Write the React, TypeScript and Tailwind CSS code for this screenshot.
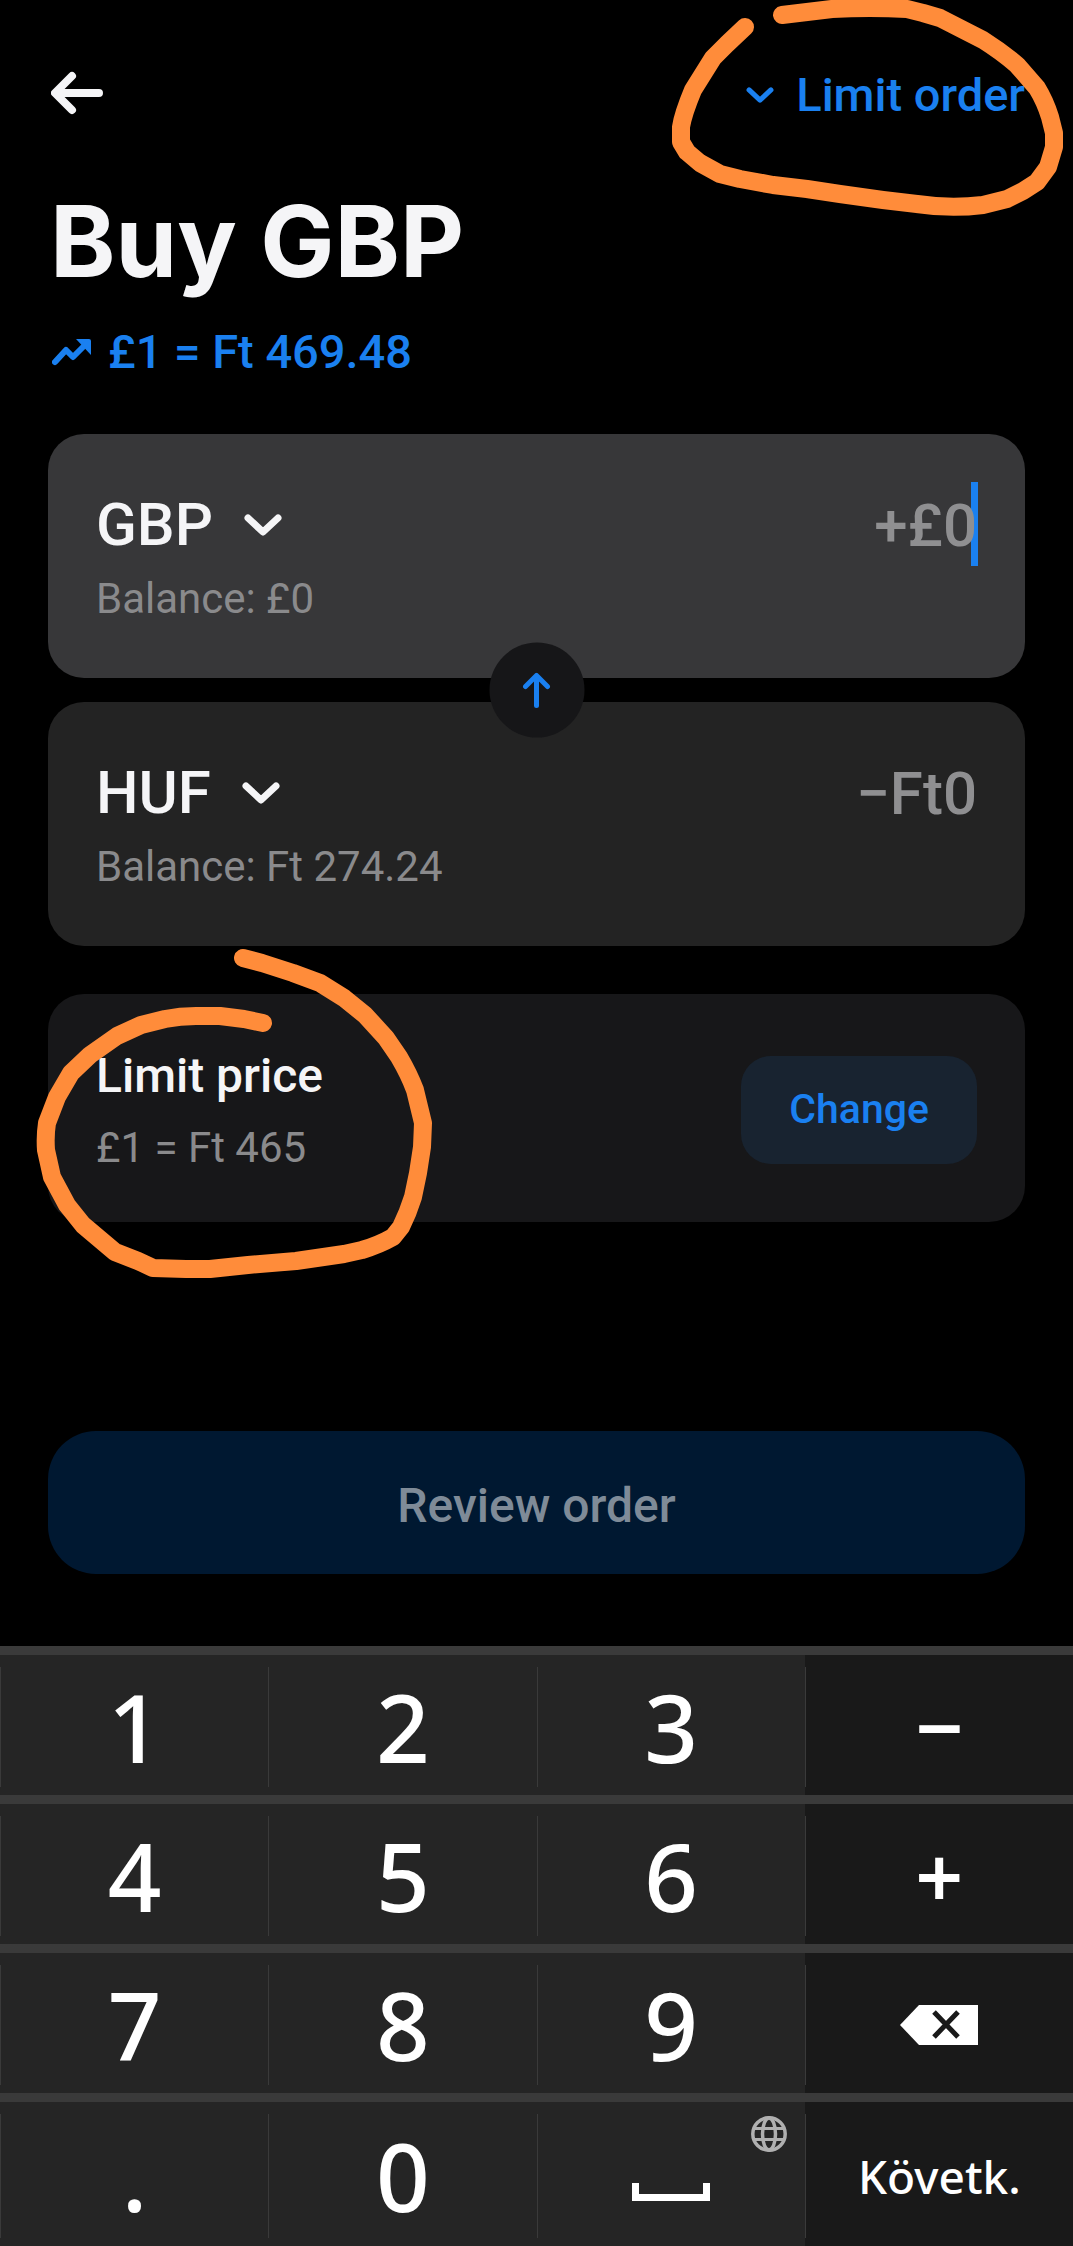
import { useState } from 'react';
import type { ReactNode } from 'react';

type Currency = 'GBP' | 'HUF';

const CURRENCIES: Currency[] = ['GBP', 'HUF'];

const ChevronDown = ({ className }: { className: string }) => (
  <svg viewBox="0 0 38 22" fill="none" stroke="currentColor" strokeLinecap="round" strokeLinejoin="round" className={className}>
    <path d="M4 4l15 14L34 4" strokeWidth="7" />
  </svg>
);

const BackIcon = () => (
  <svg viewBox="0 0 52 44" fill="none" stroke="currentColor" strokeWidth="8" strokeLinecap="round" strokeLinejoin="round" className="h-11 w-[52px]">
    <path d="M21 5L4 22l17 17M6 22h42" />
  </svg>
);

const TrendIcon = () => (
  <svg viewBox="0 0 40 28" className="h-7 w-10" fill="none">
    <path d="M3 24l11-12 7 7L33 7" stroke="currentColor" strokeWidth="6" strokeLinecap="round" strokeLinejoin="round" />
    <path d="M24 1h13q2 0 2 2v14z" fill="currentColor" />
  </svg>
);

const SwapIcon = () => (
  <svg viewBox="0 0 28 36" className="h-9 w-7" fill="none" stroke="currentColor" strokeWidth="5" strokeLinecap="round" strokeLinejoin="round">
    <path d="M3 14L14 3l11 11M14 4v29" />
  </svg>
);

const BackspaceIcon = () => (
  <svg viewBox="0 0 78 40" className="h-10 w-[78px]">
    <path d="M0 20L19 0h59v40H19z" fill="currentColor" />
    <path d="M34 7l24 25M58 7L34 32" stroke="#191919" strokeWidth="5" />
  </svg>
);

const SpaceIcon = () => (
  <svg viewBox="0 0 78 18" className="h-[18px] w-[78px]" fill="none" stroke="currentColor" strokeWidth="7">
    <path d="M3.5 0v14.5h71V0" />
  </svg>
);

const GlobeIcon = () => (
  <svg viewBox="0 0 36 36" className="h-9 w-9" fill="none" stroke="currentColor" strokeWidth="3.5">
    <circle cx="18" cy="18" r="16.2" />
    <ellipse cx="18" cy="18" rx="6.5" ry="16" />
    <path d="M3 12.5h30M3 23.5h30" strokeWidth="3" />
  </svg>
);

// hand-drawn marker around the order type
const OrderTypeMarker = () => (
  <svg
    viewBox="660 0 413 230"
    className="pointer-events-none absolute top-0 right-0 z-20 h-[230px] w-[413px]"
    fill="none"
    stroke="#ff8c3a"
    strokeWidth="18"
    strokeLinecap="round"
    strokeLinejoin="round"
  >
    <path d="M782 15L807 12L832 9Q870 7 907 9L923 13L940 18L983 40Q1002 52 1017 65L1037 88Q1045 101 1050 117L1054 133V147L1048 167L1037 182L1023 191L1007 199L983 205Q950 209 917 204L883 200L840 194L807 189L773 185L740 179L720 174L700 163L687 152L681 142V127Q683 114 693 90L713 58L727 44L745 27" />
  </svg>
);

// hand-drawn marker around the limit price
const LimitPriceMarker = () => (
  <svg
    viewBox="32 946 410 340"
    className="pointer-events-none absolute -top-12 -left-4 z-20 h-[340px] w-[410px]"
    fill="none"
    stroke="#ff8c3a"
    strokeWidth="18"
    strokeLinecap="round"
    strokeLinejoin="round"
  >
    <path d="M243 958L262 963L293 973L320 983L344 998L365 1015L386 1038L399 1057Q409 1074 415 1090L423 1123L422 1147L418 1173L413 1197Q408 1213 401 1227L393 1237Q379 1245 362 1250L344 1254L296 1261L248 1265L210 1269H186L153 1268L138 1261L115 1252L83 1225L67 1205L52 1177L46 1150Q45 1136 47 1123L57 1097L71 1073L90 1055L117 1036L141 1025L165 1019Q180 1016 196 1016H220L244 1019L263 1023" />
  </svg>
);

interface AmountCardProps {
  id: string;
  currency: Currency;
  balance: string;
  placeholder: string;
  active?: boolean;
}

const AmountCard = ({ id, currency, balance, placeholder, active }: AmountCardProps) => {
  const [selected, setSelected] = useState<Currency>(currency);
  const [amount, setAmount] = useState('');

  return (
    <div className={`rounded-[36px] px-12 pt-12 pb-13 ${active ? 'bg-[#373739]' : 'bg-[#232323]'}`}>
      <div className="mb-1 flex h-[86px] items-center justify-between">
        <div className="relative flex shrink-0 items-center">
          <select
            aria-label="Currency"
            value={selected}
            onChange={e => setSelected(e.target.value as Currency)}
            className="field-sizing-content appearance-none bg-transparent pr-[69px] text-[60px] leading-[86px] font-medium text-[#f5f5f7] outline-none"
          >
            {CURRENCIES.map(c => (
              <option key={c}>{c}</option>
            ))}
          </select>
          <ChevronDown className="pointer-events-none absolute right-0 h-[22px] w-[38px] text-[#f5f5f7]" />
        </div>
        <div className="relative min-w-0 flex-1 self-stretch">
          {active && <span className="absolute top-0 -right-px h-[84px] w-[7px] bg-[#1a80f0]" />}
          <input
            id={id}
            aria-label={`${currency} amount`}
            inputMode="decimal"
            value={amount}
            onChange={e => setAmount(e.target.value)}
            placeholder={placeholder}
            className="relative h-full w-full bg-transparent text-right text-[60px] leading-[86px] font-medium text-[#f5f5f7] outline-none placeholder:text-[#8f8f91] placeholder:opacity-100"
          />
        </div>
      </div>
      <label htmlFor={id} className="block text-[42px] leading-[54px] text-[#8a8a8c]">
        {balance}
      </label>
    </div>
  );
};

interface Key {
  label: string;
  content: ReactNode;
  corner?: ReactNode;
  side?: boolean;
}

const digit = (d: string): Key => ({ label: d, content: d });

const KEYS: Key[] = [
  digit('1'),
  digit('2'),
  digit('3'),
  { label: 'Minus', content: '−', side: true },
  digit('4'),
  digit('5'),
  digit('6'),
  { label: 'Plus', content: '+', side: true },
  digit('7'),
  digit('8'),
  digit('9'),
  { label: 'Backspace', content: <BackspaceIcon />, side: true },
  digit('.'),
  digit('0'),
  {
    label: 'Space',
    content: (
      <span className="pt-8">
        <SpaceIcon />
      </span>
    ),
    corner: <GlobeIcon />,
  },
  { label: 'Next', content: <span className="text-[46px] font-medium">Követk.</span>, side: true },
];

const Keypad = () => (
  <div className="grid grid-cols-4 grid-rows-[140px_140px_140px_144px] gap-y-[9px] border-t-[9px] border-[#3a3a3a] bg-[#3a3a3a] font-['Noto_Sans',sans-serif]">
    {KEYS.map(key => (
      <button
        key={key.label}
        type="button"
        aria-label={key.label}
        className={`relative pt-3 pb-2 text-white ${
          key.side ? 'bg-[#191919] text-[84px] font-semibold' : 'bg-[#252525] text-[94px] font-medium'
        }`}
      >
        <span className="flex h-full items-center justify-center border-l border-[#3a3a3a] leading-none">{key.content}</span>
        {key.corner && <span className="absolute top-[14px] right-[18px] text-[#b0b0b0]">{key.corner}</span>}
      </button>
    ))}
  </div>
);

export default function App() {
  const [orderType, setOrderType] = useState('Limit order');

  return (
    <div className="relative flex min-h-screen flex-col bg-black font-['Roboto',sans-serif] text-[#f5f5f7]">
      <main className="flex flex-1 flex-col px-12 pb-18">
        <header className="flex items-center justify-between pt-12 pb-12">
          <button type="button" aria-label="Back" className="flex h-[90px] items-center pl-[3px]">
            <BackIcon />
          </button>
          <div className="relative flex items-center pt-1 text-[#1a80f0]">
            <ChevronDown className="pointer-events-none absolute left-0 h-4 w-7" />
            <select
              aria-label="Order type"
              value={orderType}
              onChange={e => setOrderType(e.target.value)}
              className="field-sizing-content appearance-none bg-transparent pl-[50px] text-[47px] leading-[64px] font-medium outline-none"
            >
              <option>Limit order</option>
              <option>Market order</option>
            </select>
          </div>
        </header>

        <h1 className="pl-[2px] font-['Inter',sans-serif] text-[99px] leading-[110px] font-bold">Buy GBP</h1>
        <a href="#rate" className="mt-6 flex items-center gap-4 self-start pl-1 text-[47px] leading-[64px] font-medium text-[#1a80f0]">
          <TrendIcon />
          £1 = Ft 469.48
        </a>

        <section className="relative mt-[50px] flex flex-col gap-6">
          <AmountCard id="buy-amount" currency="GBP" balance="Balance: £0" placeholder="+£0" active />
          <AmountCard id="sell-amount" currency="HUF" balance="Balance: Ft 274.24" placeholder="−Ft0" />
          <button
            type="button"
            aria-label="Swap direction"
            className="absolute top-1/2 left-1/2 z-10 flex size-[95px] -translate-x-1/2 -translate-y-1/2 items-center justify-center rounded-full bg-[#161618] text-[#1a80f0]"
          >
            <SwapIcon />
          </button>
        </section>

        <section className="relative mt-12 flex items-center justify-between rounded-[36px] bg-[#171719] px-12 pt-12 pb-11">
          <div>
            <h2 className="text-[48px] leading-[68px] font-medium">Limit price</h2>
            <p className="mt-2 text-[42px] leading-[60px] text-[#8a8a8c]">£1 = Ft 465</p>
          </div>
          <button type="button" className="h-[108px] rounded-[30px] bg-[#182330] px-12 text-[41px] font-medium text-[#1a80f0]">
            Change
          </button>
          <LimitPriceMarker />
        </section>

        <button
          type="button"
          disabled
          className="mt-auto h-[143px] rounded-[48px] bg-[#001831] pt-1.5 text-[48px] font-medium text-[#7f8b98]"
        >
          Review order
        </button>
      </main>

      <Keypad />
      <OrderTypeMarker />
    </div>
  );
}
